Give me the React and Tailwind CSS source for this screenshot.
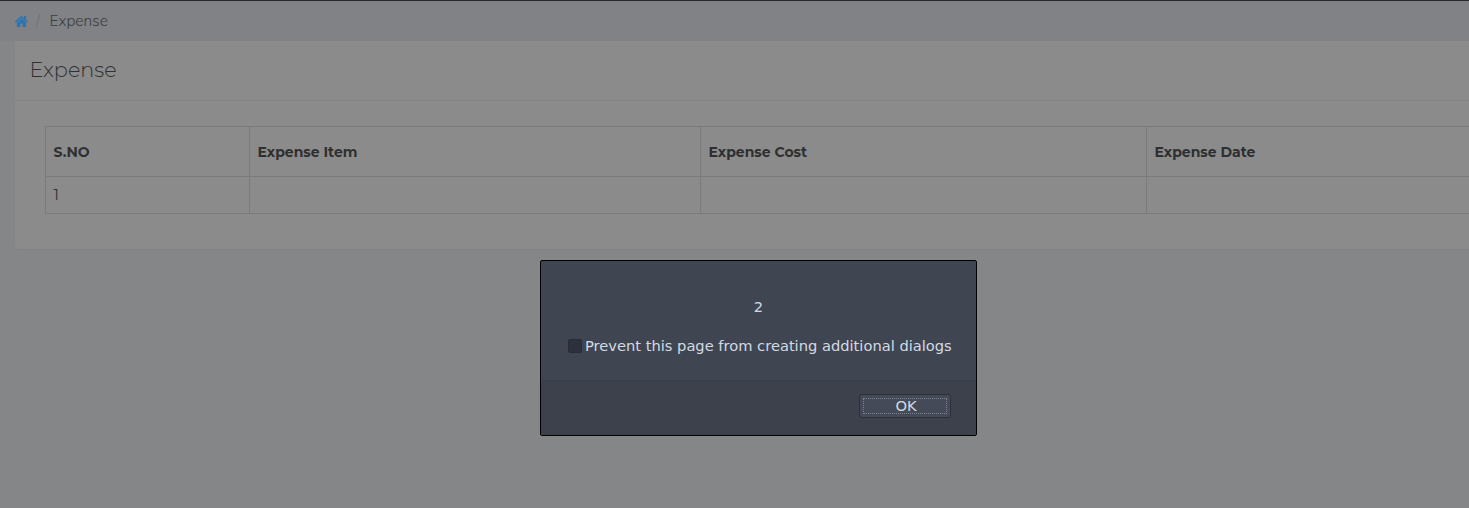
const HEADERS = ['S.NO', 'Expense Item', 'Expense Cost', 'Expense Date'];
const ROW = ['1', '', '', ''];

function HomeIcon() {
  return (
    <svg className="h-[11px] w-[13px] shrink-0" viewBox="26 253 1612 1283" fill="#2b76b0" preserveAspectRatio="none" aria-hidden="true">
      <path d="M1408 992v480q0 26-19 45t-45 19H960v-384H704v384H320q-26 0-45-19t-19-45V992q0-1 .5-3t.5-3l575-474 575 474q1 2 1 6zm223-69l-62 74q-8 9-21 11h-3q-13 0-21-7L832 424 140 1001q-12 8-24 7-13-2-21-11l-62-74q-8-10-7-23.5t11-21.5l719-599q32-26 76-26t76 26l244 204V288q0-14 9-23t23-9h192q14 0 23 9t9 23v408l219 182q10 8 11 21.5t-7 23.5z" />
    </svg>
  );
}

function Breadcrumb() {
  return (
    <nav className="flex h-[41px] shrink-0 items-center border-t border-[#252628] bg-[#808286] pl-[15px] font-['Nunito','Open_Sans',sans-serif]">
      <HomeIcon />
      <span className="ml-[8px] text-[15px] font-light text-[#6c6e72]">/</span>
      <span className="ml-[9.5px] text-[15.5px] font-light text-[#3c3d40]">Expense</span>
    </nav>
  );
}

function ExpenseTable() {
  return (
    <div className="grid w-[1540px] grid-cols-[204px_451px_446px_439px] grid-rows-[50px_37px] border-t border-l border-[#7b7b7b]">
      {HEADERS.map((h) => (
        <div key={h} className="flex items-center border-r border-b border-[#7b7b7b] pt-px pl-[7.5px] text-[14px] font-bold text-[#2e2f30]">
          {h}
        </div>
      ))}
      {ROW.map((c, i) => (
        <div key={i} className="flex items-center border-r border-b border-[#7b7b7b] pl-[7.5px] text-[15px] font-normal text-[#303132]">
          {c}
        </div>
      ))}
    </div>
  );
}

function Dialog() {
  return (
    <div role="dialog" className="absolute top-[260px] left-[540px] flex h-[176px] w-[437px] flex-col rounded-[2px] border border-black bg-[#404651] font-['DejaVu_Sans',sans-serif] text-[14.67px] leading-[18px] text-[#d3dae3]">
      <div className="flex h-[119px] flex-col pt-[37px]">
        <p className="text-center">2</p>
        <label className="mt-[21px] flex items-center pl-[27px] whitespace-nowrap">
          <span className="mr-[3px] size-[14px] rounded-[2px] border border-[#292c36] bg-[#2d313b]" />
          Prevent this page from creating additional dialogs
        </label>
      </div>
      <div className="flex flex-1 justify-end rounded-b-[1px] border-t border-[#3a3e48] bg-[#3d414c] pt-[13px] pr-[25px]">
        <button className="flex h-[24px] w-[92px] rounded-[3px] border border-[#2c2f3a] bg-[#444a58] p-[3px]">
          <span className="flex h-full w-full items-center justify-center border border-dotted border-[#7c828e] pl-[2px]">OK</span>
        </button>
      </div>
    </div>
  );
}

export default function App() {
  return (
    <div className="relative flex h-[508px] w-full flex-col overflow-hidden bg-[#848688] font-['Montserrat','Inter',sans-serif]">
      <Breadcrumb />
      <section className="ml-[15px] h-[208px] w-[1600px] shrink-0 rounded-[3px] bg-[#8b8b8b] shadow-[0_1px_1px_rgba(0,0,0,0.05)]">
        <h1 className="flex h-[60px] items-center border-b border-[#808287] pb-[2px] pl-[14.5px] text-[20.8px] font-light text-[#303132]">Expense</h1>
        <div className="pt-[25px] pl-[30px]">
          <ExpenseTable />
        </div>
      </section>
      <Dialog />
    </div>
  );
}
